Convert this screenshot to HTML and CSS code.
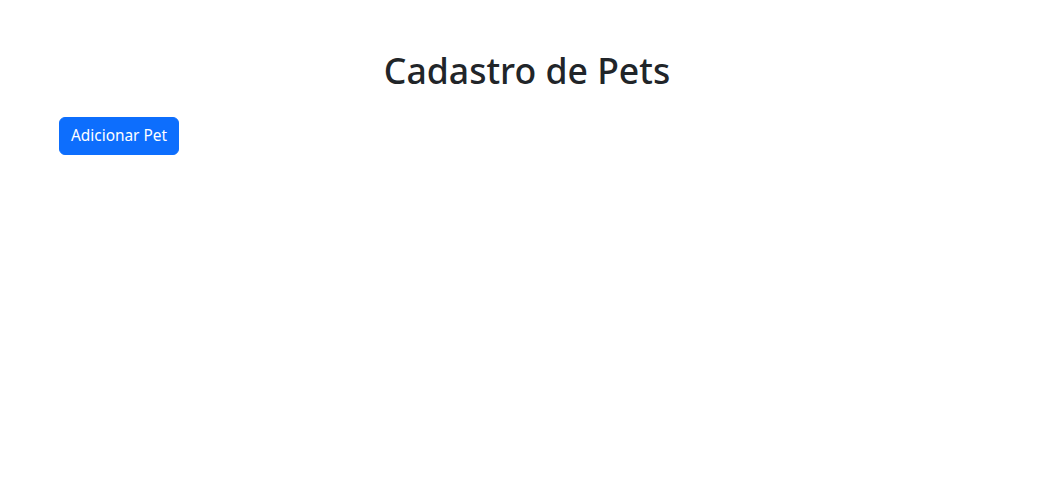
FILE: index.html
```html
<!DOCTYPE html>
<html lang="pt-BR">
<head>
<meta charset="utf-8">
<title>Cadastro de Pets</title>
<link rel="stylesheet" href="styles.css">
</head>
<body>
<div class="container">
  <h1 class="title">Cadastro de Pets</h1>
  <button class="btn-primary" type="button">Adicionar Pet</button>
</div>
</body>
</html>
```

FILE: styles.css
```css
* { box-sizing: border-box; }
body {
  margin: 0;
  background: #fff;
  color: #212529;
  font-family: "Noto Sans", "Open Sans", sans-serif;
  font-size: 16px;
  line-height: 1.5;
}
.container {
  max-width: 960px;
  margin: 48px auto 0;
  padding: 0 12px;
}
.title {
  margin: 0 0 24px;
  text-align: center;
  font-size: 35.6px;
  font-weight: 500;
  line-height: 45px;
}
.btn-primary {
  display: inline-block;
  width: 120px;
  height: 38px;
  padding: 6px 0;
  border: 1px solid #0d6efd;
  border-radius: 6px;
  background: #0d6efd;
  color: #fff;
  font-family: inherit;
  font-size: 15.4px;
  line-height: 24px;
  cursor: pointer;
}
```
